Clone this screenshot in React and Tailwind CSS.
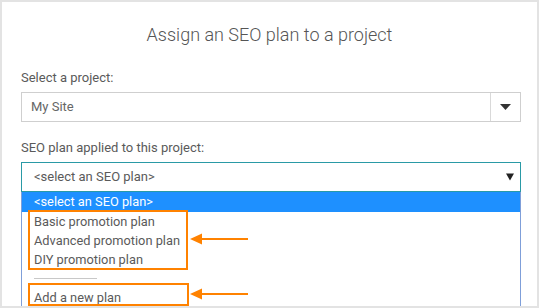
const plans = ['Basic promotion plan', 'Advanced promotion plan', 'DIY promotion plan'];

const Arrow = ({ top }) => (
  <svg className="absolute left-[187px]" style={{ top }} width="60" height="12" viewBox="0 0 60 12">
    <line x1="8" y1="6" x2="59" y2="6" stroke="#ff8200" strokeWidth="2" />
    <path d="M1 6 L13 0.5 L13 11.5 Z" fill="#ff8200" />
  </svg>
);

export default function App() {
  return (
    <div className="relative w-[539px] h-[308px] overflow-hidden bg-white border-2 border-[#e3e3e3] font-['Roboto',sans-serif] text-[#5a5a5a]">
      <h1 className="pt-[21px] text-center text-[18px] leading-6 font-light text-[#555]">
        Assign an SEO plan to a project
      </h1>

      <div className="ml-[19px] w-[500px]">
        <p className="mt-[23px] text-[13px] leading-4">Select a project:</p>
        <div className="mt-[6px] flex h-[30px] border border-[#cfcfcf] text-[13px] text-[#666]">
          <div className="flex flex-1 items-center pl-[9px]">My Site</div>
          <div className="flex w-[30px] items-center justify-center border-l border-[#d9d9d9]">
            <svg width="11" height="6" viewBox="0 0 11 6">
              <path d="M0 0 H11 L5.5 6 Z" fill="#333" />
            </svg>
          </div>
        </div>

        <p className="mt-[18px] text-[13px] leading-4">SEO plan applied to this project:</p>
        <div className="mt-[6px] flex h-[30px] items-center justify-between border border-[#2a9aa6] pl-[12px] pr-[6px] text-[13px]">
          <span>&lt;select an SEO plan&gt;</span>
          <svg width="8" height="8" viewBox="0 0 8 8">
            <path d="M0 0.5 H8 L4 7.5 Z" fill="#222" />
          </svg>
        </div>

        <ul className="border-x border-b border-[#7f9fd9] text-[12.8px] leading-[19px]">
          <li className="h-[20px] bg-[#1e90ff] pl-[12px] text-white leading-[20px]">&lt;select an SEO plan&gt;</li>
          {plans.map((p) => (
            <li key={p} className="h-[19px] pl-[12px]">{p}</li>
          ))}
          <li className="flex h-[19px] items-center pl-[12px]">
            <div className="h-px w-[63px] bg-[#c8c8c8]" />
          </li>
          <li className="h-[19px] pl-[12px]">Add a new plan</li>
        </ul>
      </div>

      <div className="absolute left-[26px] top-[208px] h-[60px] w-[160px] border-2 border-[#ff8200]" />
      <div className="absolute left-[26px] top-[281px] h-[23px] w-[161px] border-2 border-[#ff8200]" />
      <Arrow top={231} />
      <Arrow top={286} />
    </div>
  );
}
